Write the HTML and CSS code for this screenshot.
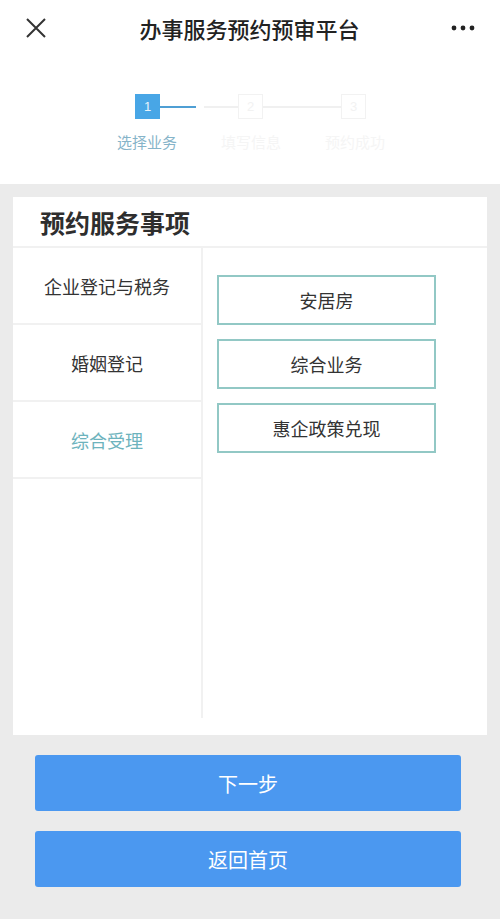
FILE: index.html
```html
<!DOCTYPE html>
<html lang="zh-CN">
<head>
<meta charset="utf-8">
<title>办事服务预约预审平台</title>
<link rel="stylesheet" href="styles.css">
</head>
<body>
<div class="page">
  <header class="topbar">
    <span class="close">
      <svg width="20" height="20" viewBox="0 0 20 20"><path d="M1 1 L19 19 M19 1 L1 19" stroke="#333" stroke-width="2" fill="none"/></svg>
    </span>
    <h1 class="title">办事服务预约预审平台</h1>
    <span class="more">
      <svg width="26" height="6" viewBox="0 0 26 6"><circle cx="3" cy="3" r="2.4" fill="#222"/><circle cx="12" cy="3" r="2.4" fill="#222"/><circle cx="21" cy="3" r="2.4" fill="#222"/></svg>
    </span>
  </header>

  <section class="steps">
    <div class="step-track">
      <span class="box box-active">1</span>
      <span class="line line-active"></span>
      <span class="line line-gap"></span>
      <span class="box">2</span>
      <span class="line line-long"></span>
      <span class="box">3</span>
    </div>
    <div class="step-labels">
      <span class="label label-active">选择业务</span>
      <span class="label">填写信息</span>
      <span class="label">预约成功</span>
    </div>
  </section>

  <main class="main">
    <div class="card">
      <div class="card-head">预约服务事项</div>
      <div class="card-body">
        <ul class="cats">
          <li class="cat">企业登记与税务</li>
          <li class="cat">婚姻登记</li>
          <li class="cat cat-active">综合受理</li>
        </ul>
        <div class="items">
          <div class="item">安居房</div>
          <div class="item">综合业务</div>
          <div class="item">惠企政策兑现</div>
        </div>
      </div>
    </div>
    <div class="actions">
      <button class="btn">下一步</button>
      <button class="btn">返回首页</button>
    </div>
  </main>
</div>
</body>
</html>
```

FILE: styles.css
```css
* { box-sizing: border-box; }
html, body { margin: 0; padding: 0; }
body {
  background: #ebebeb;
  font-family: "Noto Sans CJK SC", "Noto Sans", sans-serif;
  color: #333;
}
.page { width: 500px; min-height: 919px; background: #ebebeb; }

.topbar {
  height: 56px;
  background: #fff;
  display: flex;
  align-items: center;
  justify-content: space-between;
  padding: 0 23px 0 26px;
}
.close { width: 20px; height: 20px; display: flex; margin-top: -1px; }
.more { width: 26px; height: 6px; display: flex; }
.title {
  margin: 0 0 0 2px;
  font-size: 22px;
  font-weight: 500;
  color: #222;
  letter-spacing: 0;
}

.steps {
  background: #fff;
  height: 128px;
  padding-top: 38px;
}
.step-track {
  display: flex;
  align-items: center;
  padding-left: 135px;
  height: 25px;
}
.box {
  width: 25px;
  height: 25px;
  border: 1px solid #f2f2f2;
  color: #f2f2f2;
  font-size: 13px;
  display: flex;
  align-items: center;
  justify-content: center;
  font-family: "Liberation Sans", sans-serif;
}
.box-active {
  background: #48a6e6;
  border-color: #48a6e6;
  color: #e8f4fc;
}
.line { height: 2px; background: #f0f0f0; }
.line-active { width: 36px; background: #4f9fd4; }
.line-gap { width: 34px; margin-left: 8px; }
.line-long { width: 78px; }

.step-labels {
  display: flex;
  padding-left: 117px;
  margin-top: 12px;
  font-size: 15px;
}
.label { color: #f5f5f5; width: 60px; white-space: nowrap; }
.label:nth-child(2) { margin-left: 44px; }
.label:nth-child(3) { margin-left: 44px; }
.label-active { color: #86b4c9; }

.main { padding: 13px 13px 0; }
.card {
  background: #fff;
  height: 538px;
  display: flex;
  flex-direction: column;
}
.card-head {
  height: 51px;
  padding-left: 27px;
  display: flex;
  align-items: center;
  font-size: 25px;
  font-weight: 700;
  color: #2e2e2e;
  border-bottom: 2px solid #f1f1f1;
}
.card-body {
  display: flex;
  height: 470px;
}
.cats {
  list-style: none;
  margin: 0;
  padding: 0;
  width: 190px;
  border-right: 2px solid #f1f1f1;
}
.cat {
  height: 77px;
  display: flex;
  align-items: center;
  justify-content: center;
  font-size: 18px;
  color: #333;
  border-bottom: 2px solid #f1f1f1;
}
.cat-active { color: #6db3bd; }

.items {
  padding: 27px 0 0 14px;
  display: flex;
  flex-direction: column;
  gap: 14px;
}
.item {
  width: 219px;
  height: 50px;
  border: 2px solid #92c8c5;
  display: flex;
  align-items: center;
  justify-content: center;
  font-size: 18px;
  color: #333;
}

.actions {
  padding: 20px 26px 0 22px;
  display: flex;
  flex-direction: column;
  gap: 20px;
}
.btn {
  height: 56px;
  border: none;
  border-radius: 3px;
  background: #4b98f0;
  color: #fff;
  font-family: "Noto Sans CJK SC", "Noto Sans", sans-serif;
  font-size: 20px;
  padding: 0;
}
```
